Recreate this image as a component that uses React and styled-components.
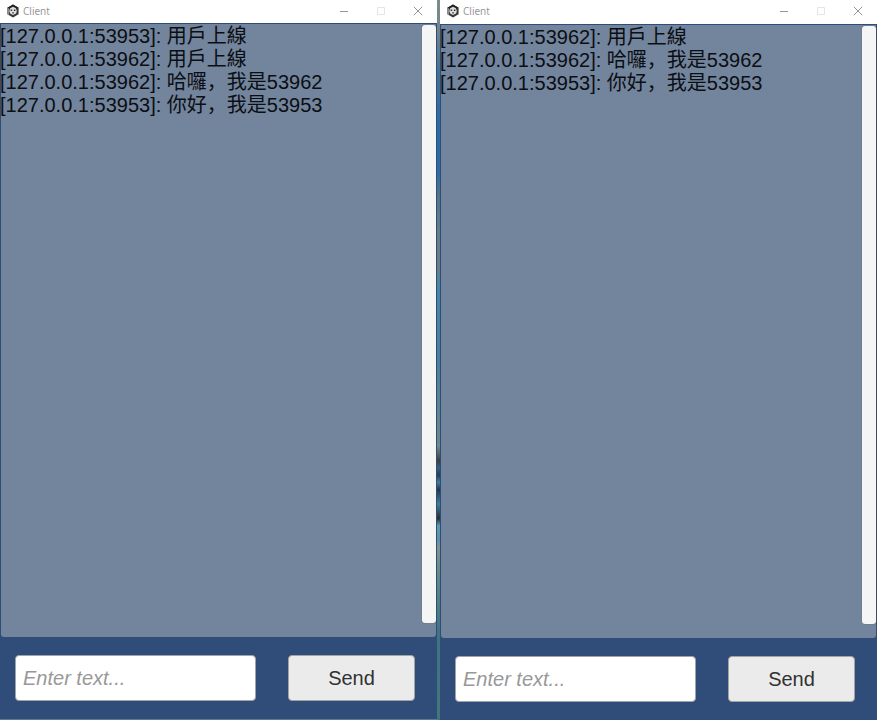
import React from "react";
import styled, { createGlobalStyle } from "styled-components";

const GlobalStyle = createGlobalStyle`
  * { box-sizing: border-box; }
  body {
    margin: 0;
    font-family: "Liberation Sans", "Noto Sans CJK SC", Arial, sans-serif;
    font-size: 20px;
  }
`;

const Desktop = styled.main`
  display: grid;
  grid-template-columns: minmax(0, 1fr) 3px minmax(0, 1fr);
  min-height: 100vh;
`;

const Wallpaper = styled.div`
  background: linear-gradient(
    to bottom,
    #7d8c89 0%,
    #73868c 4%,
    #3f7396 10%,
    #2a6ba6 17%,
    #2d6ca3 24%,
    #4f7688 27%,
    #667f86 33%,
    #697f83 37%,
    #4586a8 40%,
    #4a7f9c 50%,
    #6b8a88 62%,
    #3c3f39 64%,
    #33617d 65%,
    #243c55 66%,
    #3f7f9c 67%,
    #22374d 68%,
    #3f7f9c 70%,
    #2b2e2c 72%,
    #5b9bb4 73%,
    #5b93ae 75%,
    #82958a 76%,
    #5f8a88 80%,
    #3f7480 88%,
    #45767c 100%
  );
`;

const Window = styled.section`
  display: flex;
  flex-direction: column;
  min-width: 0;
  background: #304d79;
  border-bottom: ${(p) => (p.$edge ? "1px solid #587b92" : "0")};
`;

const TitleBar = styled.header`
  display: flex;
  align-items: center;
  height: ${(p) => p.$height}px;
  padding: 0 13px 2px 7px;
  background: #fff;
`;

const Title = styled.h1`
  flex: 1;
  margin: 0 0 0 4px;
  font: 400 10px/20px "Noto Sans", "Open Sans", sans-serif;
  color: #999;
`;

const WindowControls = styled.div`
  display: flex;
  gap: 25px;
`;

const ControlButton = styled.button`
  display: flex;
  align-items: center;
  justify-content: center;
  width: 12px;
  height: 20px;
  padding: 0;
  border: 0;
  background: none;
  color: ${(p) => (p.disabled ? "#e4e4e4" : "#979797")};
`;

const LogPanel = styled.div`
  flex: 1;
  display: flex;
  align-items: stretch;
  margin: 1px 1px 0;
  border-radius: 0 0 3px 3px;
  background: #73849d;
`;

const Messages = styled.ul`
  flex: 1;
  min-width: 0;
  margin: 0 0 0 -1px;
  padding: 1px 0 0;
  list-style: none;
  color: #0b0e12;
`;

const Message = styled.li`
  height: 23px;
  line-height: 23px;
  white-space: nowrap;
`;

const ScrollTrack = styled.div`
  display: flex;
  width: 14px;
  padding: 1px 0 14px;
`;

const ScrollHandle = styled.div`
  flex: 1;
  border-radius: 3px;
  background: #f5f5f5;
  box-shadow: 0 0 1px #4a4a4a;
`;

const Composer = styled.form`
  display: grid;
  grid-template-columns: minmax(0, 241fr) minmax(0, 127fr);
  column-gap: 32px;
  padding: 18px 22px 18px 15px;
`;

const TextBox = styled.input`
  width: 100%;
  height: 46px;
  padding: 0 7px;
  border: 1px solid #a0a3a8;
  border-radius: 4px;
  background: #fff;
  color: #323232;
  font: 20px "Liberation Sans", Arial, sans-serif;
  &::placeholder {
    color: #989898;
    opacity: 1;
    font-style: italic;
  }
`;

const SendButton = styled.button`
  height: 46px;
  padding: 0;
  border: 1px solid #a3a3a3;
  border-radius: 4px;
  background: #ebebeb;
  color: #323232;
  font: 20px "Liberation Sans", Arial, sans-serif;
`;

const AppIcon = () => (
  <svg width="12" height="14" viewBox="0 0 12 14" aria-hidden="true">
    <path d="M6 .6 11.6 3.7v6.6L6 13.4.4 10.3V3.7Z" fill="#3a3a3a" />
    <path d="M6 .6 11.6 3.7 6 6.6.4 3.7Z" fill="#222" />
    <path d="M.4 3.7 2 4.6v6.5L.4 10.3Z" fill="#8f8f8f" />
    <path d="M3.2 4.2 6 2.8l2.9 1.4L9.8 7 9 9.4 6 11 3.1 9.4 2.3 7Z" fill="#dedede" />
    <path d="M3.7 5.6h1.5v1.5H3.7ZM6.9 5.4h1.5v1.5H6.9ZM5.3 8.3h1.5v1.2H5.3Z" fill="#333" />
  </svg>
);

const MinimizeIcon = () => (
  <svg width="10" height="10" viewBox="0 0 10 10" aria-hidden="true">
    <path d="M1 5.5h8" stroke="currentColor" />
  </svg>
);

const MaximizeIcon = () => (
  <svg width="10" height="10" viewBox="0 0 10 10" aria-hidden="true">
    <path d="M1.5 1.5h7v7h-7Z" fill="none" stroke="currentColor" />
  </svg>
);

const CloseIcon = () => (
  <svg width="10" height="10" viewBox="0 0 10 10" aria-hidden="true">
    <path d="m.8.8 8.4 8.4M9.2.8.8 9.2" stroke="currentColor" />
  </svg>
);

function ChatWindow({ id, messages, titleHeight, edge }) {
  return (
    <Window $edge={edge} aria-labelledby={`${id}-title`}>
      <TitleBar $height={titleHeight}>
        <AppIcon />
        <Title id={`${id}-title`}>Client</Title>
        <WindowControls>
          <ControlButton type="button" aria-label="Minimize">
            <MinimizeIcon />
          </ControlButton>
          <ControlButton type="button" aria-label="Maximize" disabled>
            <MaximizeIcon />
          </ControlButton>
          <ControlButton type="button" aria-label="Close">
            <CloseIcon />
          </ControlButton>
        </WindowControls>
      </TitleBar>
      <LogPanel>
        <Messages>
          {messages.map((m) => (
            <Message key={m}>{m}</Message>
          ))}
        </Messages>
        <ScrollTrack>
          <ScrollHandle />
        </ScrollTrack>
      </LogPanel>
      <Composer onSubmit={(e) => e.preventDefault()}>
        <TextBox type="text" aria-label="Message" placeholder="Enter text..." />
        <SendButton type="submit">Send</SendButton>
      </Composer>
    </Window>
  );
}

const firstLog = [
  "[127.0.0.1:53953]: 用戶上線",
  "[127.0.0.1:53962]: 用戶上線",
  "[127.0.0.1:53962]: 哈囉，我是53962",
  "[127.0.0.1:53953]: 你好，我是53953",
];

export default function App() {
  return (
    <>
      <GlobalStyle />
      <Desktop>
        <ChatWindow id="first" messages={firstLog} titleHeight={23} edge />
        <Wallpaper />
        <ChatWindow id="second" messages={firstLog.slice(1)} titleHeight={24} />
      </Desktop>
    </>
  );
}
